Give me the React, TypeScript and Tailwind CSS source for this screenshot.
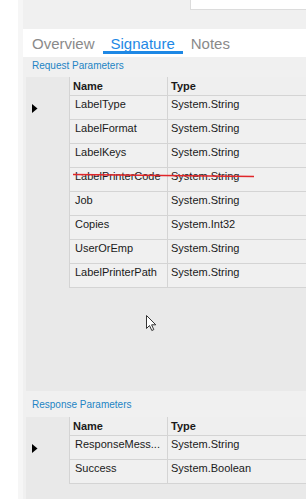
const requestRows = [
  ['LabelType', 'System.String'],
  ['LabelFormat', 'System.String'],
  ['LabelKeys', 'System.String'],
  ['LabelPrinterCode', 'System.String'],
  ['Job', 'System.String'],
  ['Copies', 'System.Int32'],
  ['UserOrEmp', 'System.String'],
  ['LabelPrinterPath', 'System.String'],
];

const responseRows = [
  ['ResponseMess...', 'System.String'],
  ['Success', 'System.Boolean'],
];

function Arrow() {
  return (
    <svg width="6" height="9" viewBox="0 0 6 9">
      <polygon points="0,0 5.5,4.5 0,9" fill="#000" />
    </svg>
  );
}

function Grid({ rows, height }: { rows: string[][]; height: string }) {
  return (
    <div className={`ml-[3px] bg-[#e9e9e9] ${height} overflow-hidden`}>
      {/* header */}
      <div className="flex h-[19px]">
        <div className="w-[43px] shrink-0" />
        <div className="w-[98px] shrink-0 flex items-center pl-[3px] border-l border-b border-[#d4d4d4] bg-[#efefef] font-bold">
          Name
        </div>
        <div className="flex-1 flex items-center pl-[3px] border-l border-b border-[#d4d4d4] bg-[#efefef] font-bold">
          Type
        </div>
      </div>
      {rows.map(([name, type], i) => (
        <div key={name} className="flex h-[24px]">
          <div className="w-[43px] shrink-0 flex items-center pl-[6px]">
            {i === 0 && <Arrow />}
          </div>
          <div className="w-[98px] shrink-0 pl-[5px] pt-[2px] border-l border-b border-[#d4d4d4] bg-[#f0f0f0] whitespace-nowrap overflow-hidden">
            {name}
          </div>
          <div className="flex-1 pl-[3px] pt-[2px] border-l border-b border-[#d4d4d4] bg-[#f0f0f0] whitespace-nowrap">
            {type}
          </div>
        </div>
      ))}
    </div>
  );
}

export default function App() {
  return (
    <div
      className="relative w-[306px] h-[499px] overflow-hidden flex bg-white text-[11px] leading-[13px] text-[#1a1a1a]"
      style={{ fontFamily: '"Liberation Sans", Arial, sans-serif' }}
    >
      {/* left edge */}
      <div className="w-[18px] shrink-0 bg-white" />
      <div className="w-[5px] shrink-0 bg-[#f6f6f6]" />

      <div className="flex-1 flex flex-col bg-[#f0f0f0]">
        {/* top area */}
        <div className="h-[29px] shrink-0">
          <div className="ml-[167px] h-[10px] bg-white border-l border-b border-[#dcdcdc]" />
        </div>

        {/* tabs */}
        <div className="h-[28px] shrink-0 bg-white flex pl-[1px] text-[15px] leading-[18px]">
          <div className="px-[8px] pt-[6px] text-[#8a8a8a]">Overview</div>
          <div className="px-[8px] pt-[6px] text-[#1e88e5] h-[25px] border-b-[3px] border-[#1e88e5]">Signature</div>
          <div className="px-[8px] pt-[6px] text-[#8a8a8a]">Notes</div>
        </div>

        {/* request */}
        <div className="h-[20px] shrink-0 pl-[9px] pt-[3px] text-[10px] leading-[12px] text-[#2284c4]">
          Request Parameters
        </div>
        <Grid rows={requestRows} height="h-[314px]" />

        {/* response */}
        <div className="h-[26px] shrink-0 pl-[9px] pt-[8px] text-[10px] leading-[12px] text-[#2284c4]">
          Response Parameters
        </div>
        <Grid rows={responseRows} height="flex-1" />
      </div>

      {/* red strike annotation */}
      <svg className="absolute left-0 top-0 pointer-events-none" width="306" height="499">
        <line x1="73" y1="174.5" x2="254" y2="176.5" stroke="#e0262a" strokeWidth="1.6" />
      </svg>

      {/* mouse cursor */}
      <svg className="absolute left-[146px] top-[315px]" width="12" height="17" viewBox="0 0 12 17">
        <path
          d="M0.5 0.5 L0.5 13.5 L3.5 10.5 L5.8 15.5 L7.8 14.6 L5.6 9.8 L9.8 9.8 Z"
          fill="#fff"
          stroke="#333"
          strokeWidth="1"
          strokeLinejoin="round"
        />
      </svg>
    </div>
  );
}
